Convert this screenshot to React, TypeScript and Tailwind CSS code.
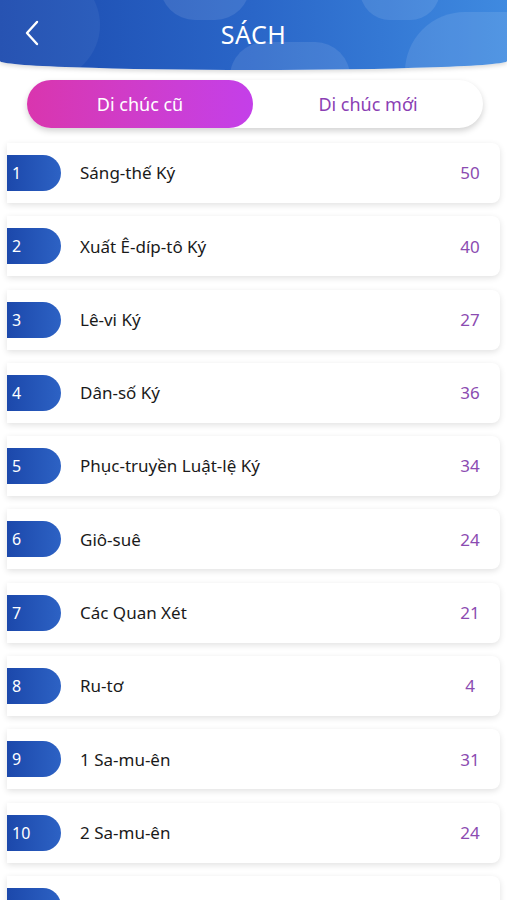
const books = [
  { name: 'Sáng-thế Ký', chapters: 50 },
  { name: 'Xuất Ê-díp-tô Ký', chapters: 40 },
  { name: 'Lê-vi Ký', chapters: 27 },
  { name: 'Dân-số Ký', chapters: 36 },
  { name: 'Phục-truyền Luật-lệ Ký', chapters: 34 },
  { name: 'Giô-suê', chapters: 24 },
  { name: 'Các Quan Xét', chapters: 21 },
  { name: 'Ru-tơ', chapters: 4 },
  { name: '1 Sa-mu-ên', chapters: 31 },
  { name: '2 Sa-mu-ên', chapters: 24 },
  { name: '1 Các Vua', chapters: 22 },
];

export default function App() {
  return (
    <div className="h-[900px] overflow-hidden bg-white font-['Noto_Sans','Open_Sans',sans-serif]">
      {/* Header */}
      <header className="relative h-[70px] overflow-hidden bg-gradient-to-r from-[#1c4aae] via-[#2a66c8] to-[#3f8ae0] rounded-b-[50%_9px] shadow-[0_2px_4px_rgba(0,0,0,0.15)]">
        <div className="absolute -left-[40px] -top-[30px] w-[140px] h-[110px] rounded-full bg-white/5" />
        <div className="absolute left-[160px] -top-[50px] w-[90px] h-[70px] rounded-full bg-white/10" />
        <div className="absolute left-[230px] top-[42px] w-[120px] h-[70px] rounded-full bg-white/10" />
        <div className="absolute left-[360px] -top-[40px] w-[80px] h-[60px] rounded-full bg-white/10" />
        <div className="absolute left-[405px] top-[12px] w-[180px] h-[120px] rounded-full bg-white/10" />
        <div className="relative flex items-center justify-center h-full pb-[2px]">
          <button className="absolute left-[24px] top-[20px] text-white">
            <svg width="16" height="26" viewBox="0 0 16 26" fill="none">
              <path d="M13 2 L3 13 L13 24" stroke="white" strokeWidth="2.4" strokeLinecap="round" strokeLinejoin="round" />
            </svg>
          </button>
          <h1 className="text-white text-[25px] leading-none tracking-[0.5px]">SÁCH</h1>
        </div>
      </header>

      {/* Segmented tabs */}
      <div className="pl-[27px] pr-[24px] pt-[10px]">
        <div className="flex h-[48px] rounded-full bg-white shadow-[0_3px_6px_rgba(0,0,0,0.18)]">
          <button className="w-[226px] rounded-full bg-gradient-to-r from-[#d935ae] to-[#c43fe9] text-white text-[18px]">
            Di chúc cũ
          </button>
          <button className="flex-1 text-[#8b3fb4] text-[18px]">Di chúc mới</button>
        </div>
      </div>

      {/* Book list */}
      <div className="pt-[15px] pl-[7px] pr-[7px] flex flex-col gap-[13.3px]">
        {books.map((b, i) => (
          <div
            key={i}
            className="flex items-center h-[60px] shrink-0 bg-white rounded-r-[8px] shadow-[0_2px_6px_rgba(0,0,0,0.12)]"
          >
            <div className="w-[54px] h-[36px] rounded-r-[18px] bg-gradient-to-r from-[#1c48ab] to-[#2d62c4] flex items-center pl-[5px] text-white text-[16px]">
              {i + 1}
            </div>
            <div className="flex-1 pl-[19px] text-[17px] text-[#1a1a1a]">{b.name}</div>
            <div className="w-[50px] mr-[5px] text-center text-[17px] text-[#8b4bb1]">{b.chapters}</div>
          </div>
        ))}
      </div>
    </div>
  );
}
